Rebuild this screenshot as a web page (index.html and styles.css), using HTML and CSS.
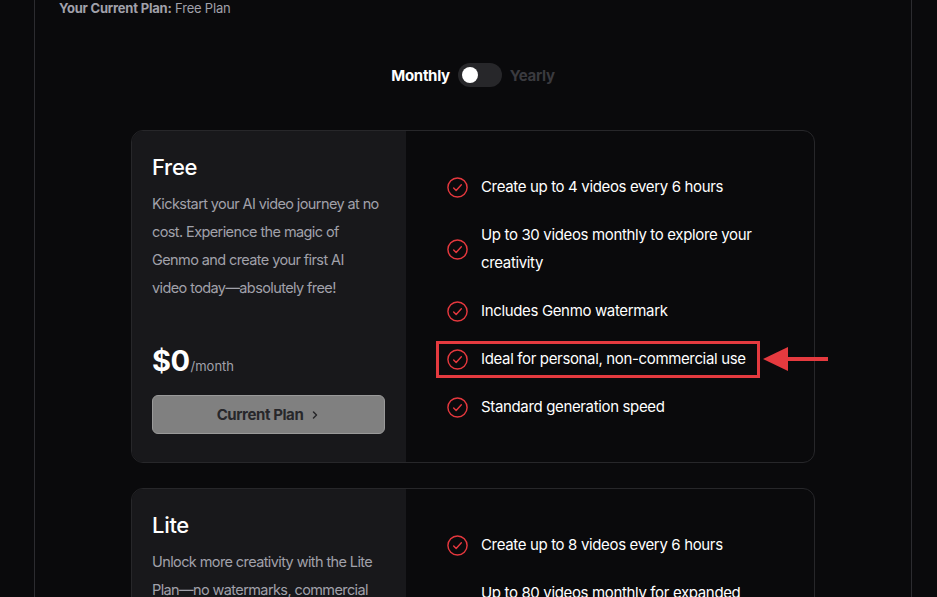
FILE: index.html
```html
<!DOCTYPE html>
<html>
<head>
<meta charset="utf-8">
<link rel="stylesheet" href="styles.css">
</head>
<body>
<div class="page">
  <div class="container">
    <div class="current"><b>Your Current Plan:</b> Free Plan</div>
    <div class="toggle-row">
      <span class="t-on">Monthly</span>
      <span class="switch"><span class="knob"></span></span>
      <span class="t-off">Yearly</span>
    </div>

    <div class="card">
      <div class="left">
        <h2 class="title">Free</h2>
        <p class="desc">Kickstart your AI video journey at no cost. Experience the magic of Genmo and create your first AI video today—absolutely free!</p>
        <div class="price"><span class="amt">$0</span><span class="per">/month</span></div>
        <button class="btn">Current Plan <svg width="10" height="10" viewBox="0 0 10 10"><path d="M3.5 2 L6.5 5 L3.5 8" fill="none" stroke="#27272a" stroke-width="1.5" stroke-linecap="round" stroke-linejoin="round"/></svg></button>
      </div>
      <ul class="features">
        <li><svg class="ck" viewBox="0 0 24 24"><circle cx="12" cy="12" r="10" /><path d="M8 12.5l2.6 2.6L16 9.2"/></svg><span>Create up to 4 videos every 6 hours</span></li>
        <li><svg class="ck" viewBox="0 0 24 24"><circle cx="12" cy="12" r="10" /><path d="M8 12.5l2.6 2.6L16 9.2"/></svg><span>Up to 30 videos monthly to explore your creativity</span></li>
        <li><svg class="ck" viewBox="0 0 24 24"><circle cx="12" cy="12" r="10" /><path d="M8 12.5l2.6 2.6L16 9.2"/></svg><span>Includes Genmo watermark</span></li>
        <li class="hl"><svg class="ck" viewBox="0 0 24 24"><circle cx="12" cy="12" r="10" /><path d="M8 12.5l2.6 2.6L16 9.2"/></svg><span>Ideal for personal, non-commercial use</span>
          <svg class="arrow" width="65" height="28" viewBox="0 0 65 28"><path d="M0 14 L25 2 L25 26 Z" fill="#e53a3f"/><rect x="22" y="12" width="43" height="4" fill="#e53a3f"/></svg>
        </li>
        <li><svg class="ck" viewBox="0 0 24 24"><circle cx="12" cy="12" r="10" /><path d="M8 12.5l2.6 2.6L16 9.2"/></svg><span>Standard generation speed</span></li>
      </ul>
    </div>

    <div class="card">
      <div class="left">
        <h2 class="title">Lite</h2>
        <p class="desc">Unlock more creativity with the Lite Plan—no watermarks, commercial use, and faster generation for your videos.</p>
      </div>
      <ul class="features">
        <li><svg class="ck" viewBox="0 0 24 24"><circle cx="12" cy="12" r="10" /><path d="M8 12.5l2.6 2.6L16 9.2"/></svg><span>Create up to 8 videos every 6 hours</span></li>
        <li><svg class="ck" viewBox="0 0 24 24"><circle cx="12" cy="12" r="10" /><path d="M8 12.5l2.6 2.6L16 9.2"/></svg><span>Up to 80 videos monthly for expanded creativity</span></li>
      </ul>
    </div>
  </div>
</div>
</body>
</html>
```

FILE: styles.css
```css
* { box-sizing: border-box; }
html, body { margin: 0; padding: 0; background: #0a0a0c; height: 100%; overflow: hidden; }
body { font-family: Inter, "Noto Sans", sans-serif; color: #fff; }
.page { padding: 0 25px 0 34px; }
.container {
  border-left: 1px solid #2c2c30;
  border-right: 1px solid #2c2c30;
  min-height: 700px;
  padding: 1px 0 0 24px;
  display: flex;
  flex-direction: column;
  align-items: center;
}
.current {
  align-self: flex-start;
  font-size: 13px;
  line-height: 14px;
  color: #a1a1aa;
  letter-spacing: -0.2px;
}
.current b { font-weight: 700; }
.toggle-row {
  margin-top: 48px;
  margin-left: -24px;
  display: flex;
  align-items: center;
  gap: 8px;
  font-size: 15px;
  font-weight: 700;
  letter-spacing: -0.3px;
}
.t-on { color: #fff; }
.t-off { color: #3a3a3f; }
.switch {
  width: 44px; height: 24px; border-radius: 12px;
  background: #27272a;
  display: flex; align-items: center; padding-left: 4px;
}
.knob { width: 16px; height: 16px; border-radius: 50%; background: #fff; }

.card {
  margin-top: 43px;
  margin-left: -24px;
  width: 684px;
  border: 1px solid #27272a;
  border-radius: 12px;
  display: flex;
  background: #0a0a0c;
}
.card + .card { margin-top: 25px; }
.left {
  width: 274px;
  flex: none;
  background: #18181b;
  border-radius: 11px 0 0 11px;
  padding: 22px 20px 28px 20px;
}
.title {
  margin: 0;
  font-size: 22px;
  line-height: 28px;
  font-weight: 500;
  letter-spacing: -0.3px;
}
.desc {
  margin: 9px 0 0;
  max-width: 228.5px;
  font-size: 14.5px;
  line-height: 28px;
  color: #a1a1aa;
  letter-spacing: -0.6px;
}
.price { margin-top: 41px; display: flex; align-items: baseline; height: 36px; line-height: 36px; }
.amt { font-size: 29px; font-weight: 700; letter-spacing: -0.5px; }
.per { font-size: 13px; color: #a1a1aa; margin-left: 1px; }
.btn {
  margin-top: 16px;
  width: 233px;
  height: 39px;
  border: 1px solid #9a9a9a;
  border-radius: 6px;
  background: #808080;
  color: #27272a;
  font-family: inherit;
  font-size: 15px;
  font-weight: 700;
  letter-spacing: -0.4px;
  display: flex; align-items: center; justify-content: center; gap: 7px;
}
.features {
  list-style: none;
  margin: 0;
  padding: 42px 30px 30px 40px;
  display: flex;
  flex-direction: column;
  gap: 20px;
}
.features li {
  display: flex;
  align-items: center;
  gap: 12px;
  font-size: 15px;
  line-height: 28px;
  letter-spacing: -0.35px;
  color: #fff;
}
.features li span { max-width: 285px; }
.ck {
  width: 23px; height: 23px; flex: none;
  fill: none; stroke: #e5383e; stroke-width: 1.5;
  stroke-linecap: round; stroke-linejoin: round;
}
.features li.hl { position: relative; width: fit-content; }
.features li.hl::before {
  content: "";
  position: absolute;
  left: -10px; right: -14px; top: -4px; bottom: -5px;
  border: 3px solid #e53a3f;
}
.arrow { position: absolute; left: calc(100% + 17px); top: 0px; }
```
